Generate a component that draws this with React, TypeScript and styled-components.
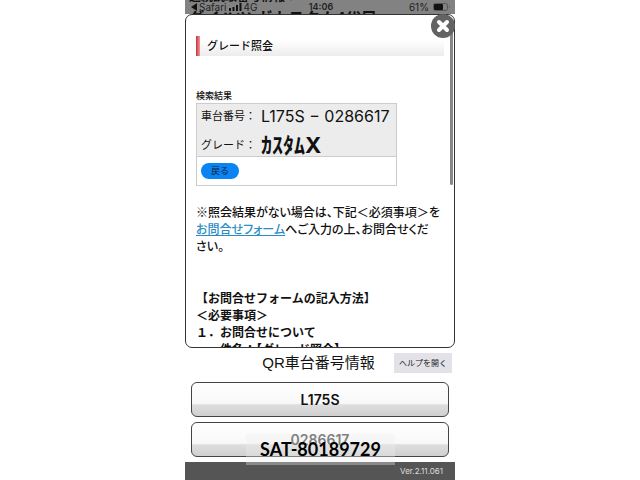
import React from "react";
import styled, { createGlobalStyle } from "styled-components";

const Global = createGlobalStyle`
  * { box-sizing: border-box; }
  body { margin: 0; background: #fff; }
  button { font-family: inherit; cursor: pointer; }
`;

const Phone = styled.main`
  position: relative;
  display: flex;
  flex-direction: column;
  width: 100%;
  max-width: 270px;
  min-height: 100vh;
  margin: 0 auto;
  color: #111;
  font-family: "Liberation Sans", "Noto Sans CJK JP", sans-serif;
`;

const TopArea = styled.header`
  position: relative;
  height: 14px;
  overflow: hidden;
  background: #828282;
`;

const BehindSmall = styled.span`
  position: absolute;
  top: -9px;
  left: 4px;
  font-size: 12px;
  line-height: 12px;
  font-weight: 700;
  white-space: nowrap;
`;

const BehindTitle = styled.span`
  position: absolute;
  top: 9px;
  left: 3px;
  font-size: 16px;
  line-height: 20px;
  font-weight: 700;
  white-space: nowrap;
`;

const StatusBar = styled.div`
  position: relative;
  display: grid;
  grid-template-columns: 1fr auto 1fr;
  align-items: center;
  height: 14px;
  padding: 0 4px 0 6px;
  font: 10px/14px Inter, sans-serif;
  color: #222;
`;

const StatusGroup = styled.div<{ $end?: boolean }>`
  display: flex;
  align-items: center;
  gap: ${(p) => (p.$end ? 4 : 2)}px;
  justify-content: ${(p) => (p.$end ? "flex-end" : "flex-start")};
`;

const Clock = styled.span`
  font-weight: 600;
  font-size: 9px;
`;

const Modal = styled.section`
  position: relative;
  height: 334px;
  border: 1px solid #333;
  border-radius: 7px;
  background: #fff;
`;

const ModalScroll = styled.div`
  height: 100%;
  overflow: hidden;
  padding: 21px 10px 0;
  border-radius: 6px;
`;

const CloseButton = styled.button`
  position: absolute;
  top: -1px;
  right: -1px;
  width: 24px;
  height: 24px;
  padding: 0;
  border: 0;
  border-radius: 50%;
  background: #636363;
  svg { display: block; }
`;

const ScrollThumb = styled.div`
  position: absolute;
  top: 14px;
  right: 1px;
  width: 3px;
  height: 156px;
  border-radius: 2px;
  background: #888;
`;

const Heading = styled.h1`
  display: flex;
  gap: 7px;
  margin: 0;
  height: 20px;
  background: linear-gradient(#fff 20%, #ececec);
  font-size: 11px;
  line-height: 20px;
  font-weight: 500;
  &::before {
    content: "";
    width: 4px;
    background: linear-gradient(to right, #c8303c, #f09a9a);
  }
`;

const ResultTable = styled.table`
  width: 201px;
  margin-top: 34px;
  border-collapse: collapse;
  caption {
    text-align: left;
    font-size: 9px;
    line-height: 13px;
    font-weight: 500;
  }
`;

const ResultRow = styled.tr<{ $plain?: boolean }>`
  background: ${(p) => (p.$plain ? "#fff" : "#ececec")};
`;

const ResultCell = styled.td`
  padding: 0 4px;
  border: 1px solid #ccc;
`;

const Field = styled.div<{ $tall?: boolean }>`
  display: flex;
  align-items: ${(p) => (p.$tall ? "flex-end" : "center")};
  height: ${(p) => (p.$tall ? 28 : 24)}px;
  font-size: 11px;
  line-height: 22px;
  white-space: nowrap;
`;

const FieldName = styled.span`
  width: 60px;
`;

const Chassis = styled.span`
  font-family: Inter, sans-serif;
  font-size: 16px;
`;

const Grade = styled.strong`
  font-family: Inter, "Noto Sans CJK JP", sans-serif;
  font-size: 22px;
`;

const BackButton = styled.button`
  display: block;
  width: 38px;
  height: 16px;
  margin: 6px 0;
  padding: 0;
  border: 0;
  border-radius: 8px;
  background: #0a84f5;
  color: #123;
  font-size: 9px;
  line-height: 16px;
`;

const Note = styled.p`
  margin: 19px 0 0;
  font-size: 12px;
  line-height: 17px;
  font-weight: 500;
  font-feature-settings: "palt";
  a { color: #2a8cc4; }
`;

const Guide = styled.div`
  margin-top: 35px;
  font-size: 12px;
  line-height: 17px;
  font-weight: 700;
  white-space: pre;
`;

const InfoBar = styled.div`
  display: grid;
  grid-template-columns: 1fr auto 1fr;
  align-items: center;
  height: 29px;
  padding-right: 3px;
`;

const InfoTitle = styled.h2`
  grid-column: 2;
  margin: 0;
  font-size: 15px;
  line-height: 20px;
  font-weight: 400;
`;

const HelpButton = styled.button`
  justify-self: end;
  width: 58px;
  height: 20px;
  padding: 0;
  border: 0;
  background: #e2e2e8;
  color: #222;
  font-size: 8px;
  white-space: nowrap;
`;

const Actions = styled.div`
  display: flex;
  flex-direction: column;
  gap: 5px;
  padding: 5px 6px;
`;

const CodeButton = styled.button<{ $muted?: boolean }>`
  height: 35px;
  padding: 0;
  border: 1px solid #444;
  border-radius: 6px;
  background: linear-gradient(#fff 0, #f8f8f8 62%, #dedede 66%, #d0d0d0);
  color: ${(p) => (p.$muted ? "#444" : "#111")};
  font: 600 14px/20px Inter, sans-serif;
`;

const Watermark = styled.div`
  position: absolute;
  bottom: 15px;
  left: 50%;
  width: 149px;
  height: 31px;
  margin-left: -74px;
  background: rgba(238, 238, 238, 0.35);
  color: #000;
  font: 700 18px/30px Lato, sans-serif;
  text-align: center;
`;

const Footer = styled.footer`
  flex: 1;
  padding: 0 12px;
  background: #555;
  color: #ddd;
  font: 8px/18px Inter, sans-serif;
  text-align: right;
`;

export default function App() {
  return (
    <>
      <Global />
      <Phone>
        <TopArea>
          <BehindSmall>連続読取番号情報：</BehindSmall>
          <BehindTitle>ダイハツ ガカスタム4代目</BehindTitle>
          <StatusBar>
            <StatusGroup>
              <svg width="6" height="8" viewBox="0 0 6 8"><path d="M6 0v8L0 4z" fill="#111" /></svg>
              <span>Safari</span>
              <svg width="13" height="8" viewBox="0 0 13 8"><path d="M0 5h2v3H0zM3.5 4h2v4h-2zM7 2h2v6H7zM10.500 0h2v8h-2z" fill="#111" /></svg>
              <span>4G</span>
            </StatusGroup>
            <Clock>14:06</Clock>
            <StatusGroup $end>
              <span>61%</span>
              <svg width="18" height="8" viewBox="0 0 18 8">
                <rect x=".5" y=".5" width="14" height="7" rx="2" fill="none" stroke="#555" />
                <rect x="1" y="1" width="9" height="6" rx="1" fill="#111" />
                <path d="M16 2.500q1.500 1.500 0 3z" fill="#555" />
              </svg>
            </StatusGroup>
          </StatusBar>
        </TopArea>
        <Modal>
          <ModalScroll>
            <Heading>グレード照会</Heading>
            <ResultTable>
              <caption>検索結果</caption>
              <tbody>
                <ResultRow>
                  <ResultCell>
                    <Field><FieldName>車台番号：</FieldName><Chassis>L175S − 0286617</Chassis></Field>
                    <Field $tall><FieldName>グレード：</FieldName><Grade>ｶｽﾀﾑX</Grade></Field>
                  </ResultCell>
                </ResultRow>
                <ResultRow $plain>
                  <ResultCell><BackButton>戻る</BackButton></ResultCell>
                </ResultRow>
              </tbody>
            </ResultTable>
            <Note>
              ※照会結果がない場合は、下記＜必須事項＞を<br />
              <a href="#form">お問合せフォーム</a>へご入力の上、お問合せくだ<br />
              さい。
            </Note>
            <Guide>{"【お問合せフォームの記入方法】\n＜必要事項＞\n１．お問合せについて\n　・件名：【グレード照会】"}</Guide>
          </ModalScroll>
          <ScrollThumb />
          <CloseButton aria-label="閉じる">
            <svg width="24" height="24" viewBox="0 0 24 24"><path d="M8 8l8 8M16 8l-8 8" stroke="#fff" strokeWidth="4" strokeLinecap="round" /></svg>
          </CloseButton>
        </Modal>
        <InfoBar>
          <InfoTitle>QR車台番号情報</InfoTitle>
          <HelpButton>ヘルプを開く</HelpButton>
        </InfoBar>
        <Actions>
          <CodeButton>L175S</CodeButton>
          <CodeButton $muted>0286617</CodeButton>
        </Actions>
        <Footer>Ver.2.11.061</Footer>
        <Watermark>SAT-80189729</Watermark>
      </Phone>
    </>
  );
}
